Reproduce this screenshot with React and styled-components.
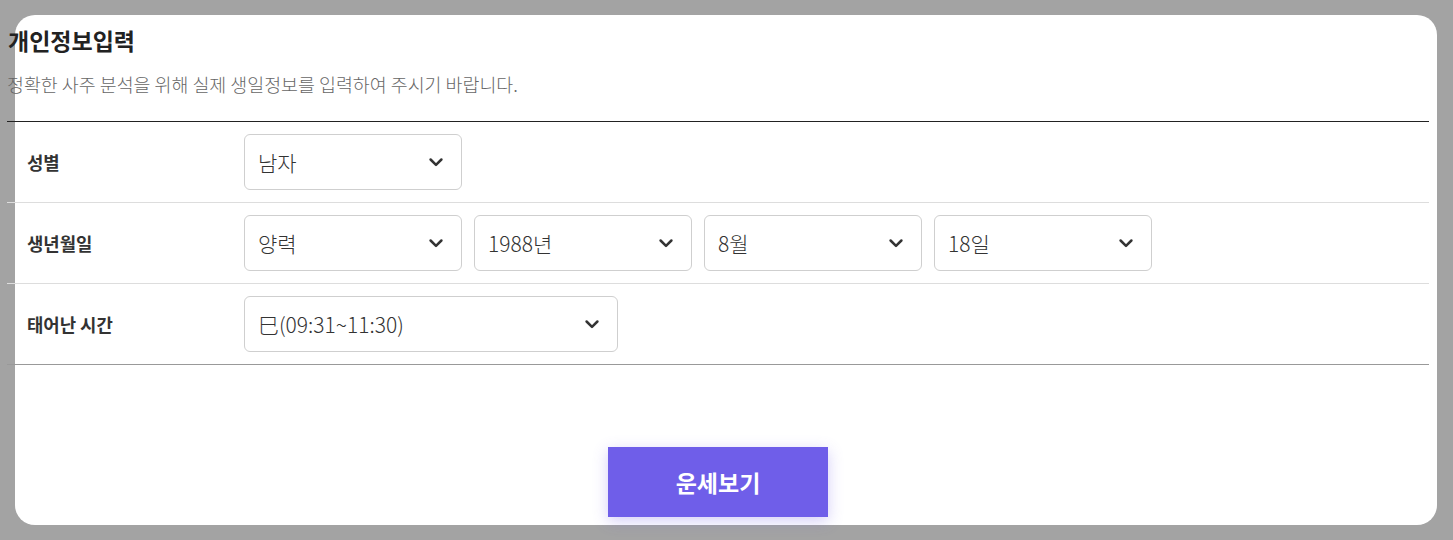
import React from "react";
import styled, { createGlobalStyle } from "styled-components";

const GlobalStyle = createGlobalStyle`
  html, body {
    margin: 0;
    padding: 0;
    background: #a3a3a3;
  }
  body {
    font-family: "Noto Sans CJK KR", "Noto Sans", sans-serif;
  }
`;

const Backdrop = styled.div`
  padding: 15px 16px 15px 15px;
  min-height: 540px;
  box-sizing: border-box;
`;

const Card = styled.div`
  background: #ffffff;
  border-radius: 20px;
  height: 510px;
  box-sizing: border-box;
  padding: 9px 0 8px 0;
  display: flex;
  flex-direction: column;
`;

const Content = styled.div`
  margin: 0 8px 0 -8px;
  display: flex;
  flex-direction: column;
  flex: 1;
`;

const Title = styled.h2`
  margin: 0;
  padding-left: 1px;
  font-size: 23px;
  font-weight: 700;
  color: #222;
  line-height: 32px;
`;

const Subtitle = styled.p`
  margin: 15px 0 0 0;
  font-size: 18.4px;
  font-weight: 300;
  color: #666;
  line-height: 26px;
`;

const Form = styled.div`
  margin-top: 24px;
  border-top: 1px solid #222;
  border-bottom: 1px solid #999;
`;

const Row = styled.div`
  display: flex;
  align-items: center;
  height: 80px;
  border-top: ${(p) => (p.$first ? "none" : "1px solid #dddddd")};
`;

const Label = styled.div`
  width: 237px;
  padding-left: 20px;
  box-sizing: border-box;
  font-size: 17.8px;
  font-weight: 700;
  color: #333;
`;

const Fields = styled.div`
  display: flex;
  gap: 12px;
`;

const Select = styled.div`
  width: ${(p) => p.$width || 218}px;
  height: 56px;
  box-sizing: border-box;
  border: 1px solid #cfcfcf;
  border-radius: 6px;
  display: flex;
  align-items: center;
  justify-content: space-between;
  padding: 0 15px 0 13px;
  font-size: 21px;
  font-weight: 300;
  color: #333;
  background: #fff;
`;

const Chevron = () => (
  <svg width="20" height="20" viewBox="0 0 24 24" fill="none" stroke="#333" strokeWidth="3" strokeLinecap="round" strokeLinejoin="round">
    <path d="M5.5 9l6.5 6.5L18.5 9" />
  </svg>
);

const Footer = styled.div`
  flex: 1;
  display: flex;
  align-items: flex-end;
  justify-content: center;
`;

const SubmitButton = styled.button`
  width: 220px;
  height: 70px;
  border: none;
  background: #6f5ee9;
  color: #fff;
  font-family: inherit;
  font-size: 23px;
  font-weight: 700;
  box-shadow: 0 4px 14px rgba(111, 94, 233, 0.3);
  cursor: pointer;
`;

const Field = ({ value, width }) => (
  <Select $width={width}>
    <span>{value}</span>
    <Chevron />
  </Select>
);

export default function App() {
  return (
    <>
      <GlobalStyle />
      <Backdrop>
        <Card>
          <Content>
            <Title>개인정보입력</Title>
            <Subtitle>정확한 사주 분석을 위해 실제 생일정보를 입력하여 주시기 바랍니다.</Subtitle>
            <Form>
              <Row $first>
                <Label>성별</Label>
                <Fields>
                  <Field value="남자" />
                </Fields>
              </Row>
              <Row>
                <Label>생년월일</Label>
                <Fields>
                  <Field value="양력" />
                  <Field value="1988년" />
                  <Field value="8월" />
                  <Field value="18일" />
                </Fields>
              </Row>
              <Row>
                <Label>태어난 시간</Label>
                <Fields>
                  <Field value="巳(09:31~11:30)" width={374} />
                </Fields>
              </Row>
            </Form>
            <Footer>
              <SubmitButton>운세보기</SubmitButton>
            </Footer>
          </Content>
        </Card>
      </Backdrop>
    </>
  );
}
